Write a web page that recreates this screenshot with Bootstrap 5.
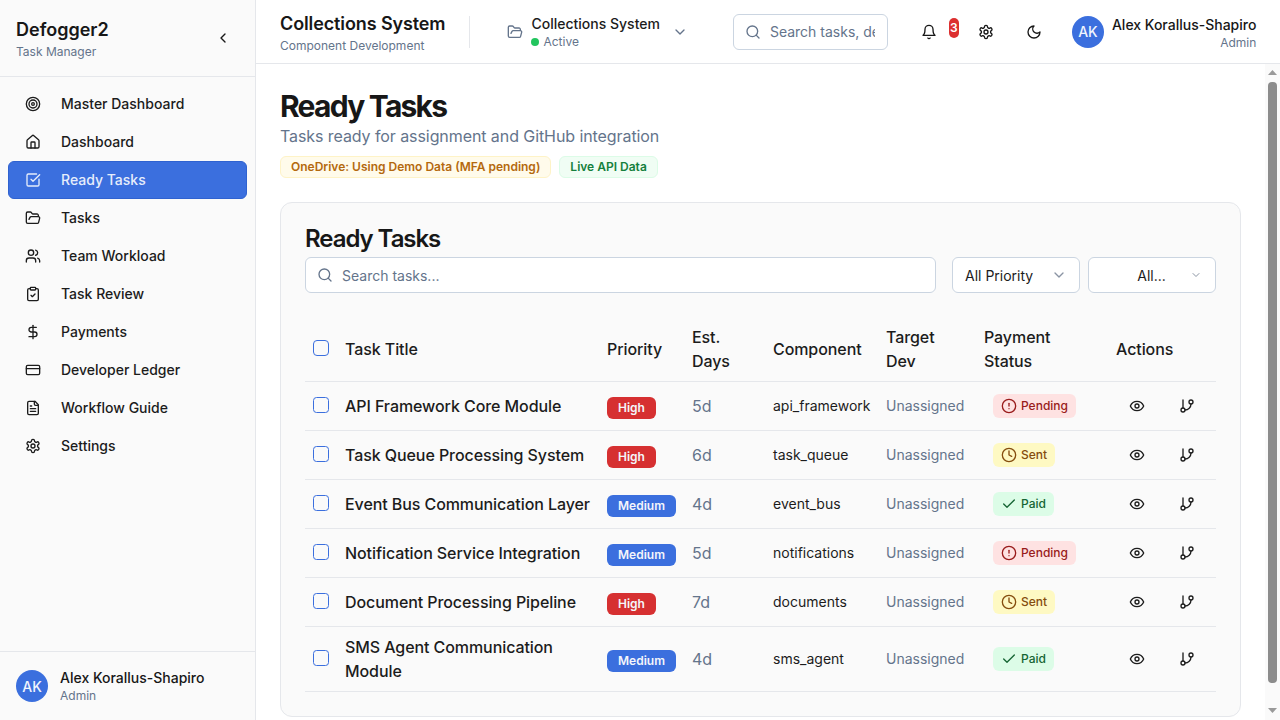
<!DOCTYPE html>
<html lang="en">
<head>
    <meta charset="UTF-8">
    <meta name="viewport" content="width=device-width, initial-scale=1.0">
    <title>Ready Tasks</title>
    <link href="https://cdn.jsdelivr.net/npm/bootstrap@5.3.0/dist/css/bootstrap.min.css" rel="stylesheet">
    <style>
        body {
            font-family: "Inter", "Liberation Sans", sans-serif;
            color: #171717;
            font-size: 14px;
        }
        .ico {
            width: 16px;
            height: 16px;
            fill: none;
            stroke: currentColor;
            stroke-width: 2;
            stroke-linecap: round;
            stroke-linejoin: round;
            flex-shrink: 0;
        }
        .muted-text { color: #64748b; }

        /* sidebar */
        .side-panel {
            width: 256px;
            flex-shrink: 0;
            background: #fafafa;
            border-right: 1px solid #e5e7eb;
        }
        .brand-box {
            height: 77px;
            padding: 16px 16px 0;
            border-bottom: 1px solid #e5e7eb;
        }
        .brand-name { font-size: 18px; font-weight: 600; line-height: 28px; }
        .brand-sub { font-size: 12px; line-height: 16px; color: #64748b; }
        .collapse-btn { width: 40px; height: 40px; margin-right: -4px; margin-top: 2px; }
        .side-nav { padding: 8px; }
        .side-link {
            height: 38px;
            padding: 0 16px;
            gap: 20px;
            font-weight: 500;
            line-height: 20px;
            color: #1c1c1c;
            border: 1px solid transparent;
            border-radius: 6px;
            text-decoration: none;
        }
        .side-link.is-current {
            background: #3b6fde;
            border-color: #2f62d0;
            color: #e6edfb;
        }
        .side-user {
            height: 69px;
            padding: 0 16px;
            gap: 12px;
            border-top: 1px solid #e5e7eb;
        }
        .avatar-dot {
            width: 32px;
            height: 32px;
            flex-shrink: 0;
            background: #3b6fde;
            color: #f1f5fd;
            font-weight: 500;
        }
        .user-name { font-weight: 500; line-height: 20px; white-space: nowrap; }
        .user-role { font-size: 12px; line-height: 16px; color: #64748b; }

        /* top bar */
        .top-strip {
            height: 64px;
            flex-shrink: 0;
            padding: 0 24px;
            background: #fff;
            border-bottom: 1px solid #e5e7eb;
            white-space: nowrap;
        }
        .top-title { font-size: 18px; font-weight: 600; letter-spacing: -0.11px; line-height: 24px; margin-top: 3px; }
        .top-sub { font-size: 12px; line-height: 18px; color: #64748b; margin-top: 1px; }
        .top-divider { width: 1px; height: 32px; background: #e5e7eb; margin: 0 37px 0 24px; flex-shrink: 0; }
        .project-name { font-weight: 500; line-height: 20px; color: #1c1c1c; }
        .project-state { font-size: 12px; line-height: 16px; color: #64748b; gap: 4px; }
        .state-dot { width: 8px; height: 8px; background: #22c55e; }
        .search-box {
            border: 1px solid #cbd5e1;
            border-radius: 6px;
            background: #fff;
            color: #64748b;
        }
        .search-box input {
            border: 0;
            outline: 0;
            padding: 0;
            background: transparent;
            min-width: 0;
            width: 100%;
            color: #171717;
        }
        .search-box input::placeholder { color: #64748b; opacity: 1; }
        .top-search { width: 155px; height: 36px; padding: 0 12px 0 11px; gap: 9px; margin-left: 45px; flex-shrink: 0; }
        .bell-wrap { width: 40px; height: 40px; margin-left: 21px; flex-shrink: 0; }
        .bell-count {
            top: 6px;
            left: 40px;
            width: 10px;
            height: 20px;
            background: #dc2f2f;
            color: #fff;
            font-size: 12px;
            font-weight: 600;
            border-radius: 5px;
        }
        .top-icon { width: 40px; height: 40px; flex-shrink: 0; }
        .gear-top { margin-left: 17px; }
        .moon-top { margin-left: 8px; }
        .top-user { margin-left: 18px; gap: 8px; }
        .top-user .user-name { line-height: 18px; margin-top: 2px; }
        .top-user .user-role { line-height: 15px; margin-top: 1px; }

        /* main */
        .page-scroll { overflow: hidden; padding: 24px; min-height: 0; min-width: 0; }
        .scroll-strip { width: 15px; flex-shrink: 0; background: #fafafa; padding-bottom: 2px; }
        .scroll-arrow { height: 16px; color: #999; }
        .scroll-arrow svg { width: 9px; height: 5px; fill: currentColor; }
        .scroll-thumb { width: 9px; height: 601px; margin: 2px 0 0 3px; background: #8c8c8c; border-radius: 4px; }
        .page-title { font-size: 30px; font-weight: 700; letter-spacing: -1.75px; line-height: 36px; margin: 0; }
        .page-sub { font-size: 16px; letter-spacing: -0.08px; line-height: 24px; color: #64748b; }
        .source-pill {
            font-size: 12px;
            font-weight: 600;
            line-height: 20px;
            padding: 0 10px;
            border: 1px solid;
            border-radius: 6px;
        }
        .pill-demo { background: #fffbeb; border-color: #fef3c7; color: #b4690e; }
        .pill-live { background: #f0fdf4; border-color: #dcfce7; color: #15803d; }
        .pill-row { margin-top: 8px; margin-bottom: 24px; }
        .task-panel {
            background: #fafafa;
            border: 1px solid #e5e7eb;
            border-radius: 12px;
            padding: 24px;
        }
        .panel-title { font-size: 24px; font-weight: 600; letter-spacing: -1.05px; line-height: 24px; margin: 0 0 6px; color: #171717; }
        .panel-search { height: 36px; padding: 0 12px 0 11px; gap: 9px; flex: 1; margin-right: 8px; }
        .filter-btn {
            height: 36px;
            width: 128px;
            padding: 0 12px;
            font-size: 14px;
            color: #1c1c1c;
            background: #fff;
            border: 1px solid #cbd5e1;
            border-radius: 6px;
        }
        .filter-btn .ico { color: #8a94a3; }
        .filter-narrow .ico { width: 12px; height: 12px; margin-right: 1px; }
        .filter-narrow span { flex: 1; text-align: center; padding-left: 12px; }

        .task-table { table-layout: fixed; margin: 20px 0 0; --bs-table-bg: transparent; width: 911px; }
        .task-table th, .task-table td {
            padding: 8px;
            vertical-align: middle;
            line-height: 20px;
            border-bottom: 1px solid #e5e7eb;
            color: #1c1c1c;
        }
        .task-table th { font-size: 16px; font-weight: 500; letter-spacing: -0.08px; line-height: 24px; padding-top: 12px; padding-bottom: 8px; height: 68px; }
        .task-table td { height: 49px; }
        .task-table td.task-name { font-size: 16px; font-weight: 500; letter-spacing: -0.08px; line-height: 24px; padding-right: 4px; }
        .task-table td.task-days { font-size: 16px; color: #64748b; }
        .task-table td.task-dev { color: #64748b; }
        .row-check {
            width: 16px;
            height: 16px;
            margin: -2px 0 0;
            display: block;
            background-color: transparent;
            border: 1px solid #3b6fde;
            border-radius: 4px;
        }
        .level-tag {
            display: inline-block;
            height: 22px;
            line-height: 22px;
            padding: 0 11px;
            font-size: 12px;
            font-weight: 600;
            color: #f4f6fb;
            border-radius: 6px;
            vertical-align: -4px;
        }
        .level-high { background: #d63031; }
        .level-medium { background: #3b6fde; }
        .pay-tag {
            display: inline-flex;
            align-items: center;
            gap: 4px;
            height: 24px;
            padding: 0 8px;
            margin-left: 9px;
            font-size: 12px;
            font-weight: 500;
            border-radius: 6px;
        }
        .pay-pending { background: #fee2e2; color: #991b1b; }
        .pay-sent { background: #fef9c3; color: #854d0e; }
        .pay-paid { background: #dcfce7; color: #166534; }
        .act-btn { width: 42px; height: 32px; color: #1c1c1c; }
    </style>
</head>
<body class="d-flex vh-100 overflow-hidden">
    <svg class="d-none">
        <symbol id="i-target" viewBox="0 0 24 24"><circle cx="12" cy="12" r="10"/><circle cx="12" cy="12" r="6"/><circle cx="12" cy="12" r="2"/></symbol>
        <symbol id="i-home" viewBox="0 0 24 24"><path d="M15 21v-8a1 1 0 0 0-1-1h-4a1 1 0 0 0-1 1v8"/><path d="M3 10a2 2 0 0 1 .709-1.528l7-5.999a2 2 0 0 1 2.582 0l7 5.999A2 2 0 0 1 21 10v9a2 2 0 0 1-2 2H5a2 2 0 0 1-2-2z"/></symbol>
        <symbol id="i-check-square" viewBox="0 0 24 24"><path d="M21 10.656V19a2 2 0 0 1-2 2H5a2 2 0 0 1-2-2V5a2 2 0 0 1 2-2h12.344"/><path d="m9 11 3 3L22 4"/></symbol>
        <symbol id="i-folder" viewBox="0 0 24 24"><path d="m6 14 1.5-2.9A2 2 0 0 1 9.24 10H20a2 2 0 0 1 1.94 2.5l-1.54 6a2 2 0 0 1-1.95 1.5H4a2 2 0 0 1-2-2V5a2 2 0 0 1 2-2h3.9a2 2 0 0 1 1.69.9l.81 1.2a2 2 0 0 0 1.67.9H18a2 2 0 0 1 2 2v2"/></symbol>
        <symbol id="i-users" viewBox="0 0 24 24"><path d="M16 21v-2a4 4 0 0 0-4-4H6a4 4 0 0 0-4 4v2"/><circle cx="9" cy="7" r="4"/><path d="M22 21v-2a4 4 0 0 0-3-3.87"/><path d="M16 3.13a4 4 0 0 1 0 7.75"/></symbol>
        <symbol id="i-clipboard" viewBox="0 0 24 24"><rect x="8" y="2" width="8" height="4" rx="1"/><path d="M16 4h2a2 2 0 0 1 2 2v14a2 2 0 0 1-2 2H6a2 2 0 0 1-2-2V6a2 2 0 0 1 2-2h2"/><path d="m9 14 2 2 4-4"/></symbol>
        <symbol id="i-dollar" viewBox="0 0 24 24"><path d="M12 2v20"/><path d="M17 5H9.5a3.5 3.5 0 0 0 0 7h5a3.5 3.5 0 0 1 0 7H6"/></symbol>
        <symbol id="i-card" viewBox="0 0 24 24"><rect x="2" y="5" width="20" height="14" rx="2"/><path d="M2 10h20"/></symbol>
        <symbol id="i-file" viewBox="0 0 24 24"><path d="M15 2H6a2 2 0 0 0-2 2v16a2 2 0 0 0 2 2h12a2 2 0 0 0 2-2V7Z"/><path d="M14 2v4a2 2 0 0 0 2 2h4"/><path d="M10 9H8"/><path d="M16 13H8"/><path d="M16 17H8"/></symbol>
        <symbol id="i-gear" viewBox="0 0 24 24"><path d="M12.22 2h-.44a2 2 0 0 0-2 2v.18a2 2 0 0 1-1 1.73l-.43.25a2 2 0 0 1-2 0l-.15-.08a2 2 0 0 0-2.73.73l-.22.38a2 2 0 0 0 .73 2.73l.15.1a2 2 0 0 1 1 1.72v.51a2 2 0 0 1-1 1.74l-.15.09a2 2 0 0 0-.73 2.73l.22.38a2 2 0 0 0 2.73.73l.15-.08a2 2 0 0 1 2 0l.43.25a2 2 0 0 1 1 1.73V20a2 2 0 0 0 2 2h.44a2 2 0 0 0 2-2v-.18a2 2 0 0 1 1-1.73l.43-.25a2 2 0 0 1 2 0l.15.08a2 2 0 0 0 2.73-.73l.22-.39a2 2 0 0 0-.73-2.73l-.15-.08a2 2 0 0 1-1-1.74v-.5a2 2 0 0 1 1-1.74l.15-.09a2 2 0 0 0 .73-2.73l-.22-.38a2 2 0 0 0-2.73-.73l-.15.08a2 2 0 0 1-2 0l-.43-.25a2 2 0 0 1-1-1.73V4a2 2 0 0 0-2-2z"/><circle cx="12" cy="12" r="3"/></symbol>
        <symbol id="i-left" viewBox="0 0 24 24"><path d="m15 18-6-6 6-6"/></symbol>
        <symbol id="i-down" viewBox="0 0 24 24"><path d="m6 9 6 6 6-6"/></symbol>
        <symbol id="i-search" viewBox="0 0 24 24"><circle cx="11" cy="11" r="8"/><path d="m21 21-4.3-4.3"/></symbol>
        <symbol id="i-bell" viewBox="0 0 24 24"><path d="M6 8a6 6 0 0 1 12 0c0 7 3 9 3 9H3s3-2 3-9"/><path d="M10.3 21a1.94 1.94 0 0 0 3.4 0"/></symbol>
        <symbol id="i-moon" viewBox="0 0 24 24"><path d="M12 3a6 6 0 0 0 9 9 9 9 0 1 1-9-9Z"/></symbol>
        <symbol id="i-eye" viewBox="0 0 24 24"><path d="M2 12s3-7 10-7 10 7 10 7-3 7-10 7-10-7-10-7Z"/><circle cx="12" cy="12" r="3"/></symbol>
        <symbol id="i-branch" viewBox="0 0 24 24"><path d="M6 3v12"/><circle cx="18" cy="6" r="3"/><circle cx="6" cy="18" r="3"/><path d="M18 9a9 9 0 0 1-9 9"/></symbol>
        <symbol id="i-alert" viewBox="0 0 24 24"><circle cx="12" cy="12" r="10"/><path d="M12 8v4"/><path d="M12 16h.01"/></symbol>
        <symbol id="i-clock" viewBox="0 0 24 24"><circle cx="12" cy="12" r="10"/><path d="M12 6v6l4 2"/></symbol>
        <symbol id="i-check" viewBox="0 0 24 24"><path d="M20 6 9 17l-5-5"/></symbol>
    </svg>

    <!-- Sidebar -->
    <aside class="side-panel d-flex flex-column">
        <div class="brand-box d-flex justify-content-between align-items-start">
            <div>
                <div class="brand-name">Defogger2</div>
                <div class="brand-sub">Task Manager</div>
            </div>
            <div class="collapse-btn d-flex align-items-center justify-content-center"><svg class="ico"><use href="#i-left"/></svg></div>
        </div>
        <nav class="side-nav flex-grow-1 d-flex flex-column">
            <a class="side-link d-flex align-items-center" href="#"><svg class="ico"><use href="#i-target"/></svg>Master Dashboard</a>
            <a class="side-link d-flex align-items-center" href="#"><svg class="ico"><use href="#i-home"/></svg>Dashboard</a>
            <a class="side-link is-current d-flex align-items-center" href="#"><svg class="ico"><use href="#i-check-square"/></svg>Ready Tasks</a>
            <a class="side-link d-flex align-items-center" href="#"><svg class="ico"><use href="#i-folder"/></svg>Tasks</a>
            <a class="side-link d-flex align-items-center" href="#"><svg class="ico"><use href="#i-users"/></svg>Team Workload</a>
            <a class="side-link d-flex align-items-center" href="#"><svg class="ico"><use href="#i-clipboard"/></svg>Task Review</a>
            <a class="side-link d-flex align-items-center" href="#"><svg class="ico"><use href="#i-dollar"/></svg>Payments</a>
            <a class="side-link d-flex align-items-center" href="#"><svg class="ico"><use href="#i-card"/></svg>Developer Ledger</a>
            <a class="side-link d-flex align-items-center" href="#"><svg class="ico"><use href="#i-file"/></svg>Workflow Guide</a>
            <a class="side-link d-flex align-items-center" href="#"><svg class="ico"><use href="#i-gear"/></svg>Settings</a>
        </nav>
        <div class="side-user d-flex align-items-center">
            <div class="avatar-dot rounded-circle d-flex align-items-center justify-content-center">AK</div>
            <div>
                <div class="user-name">Alex Korallus-Shapiro</div>
                <div class="user-role">Admin</div>
            </div>
        </div>
    </aside>

    <div class="flex-grow-1 d-flex flex-column" style="min-width: 0">
        <!-- Top bar -->
        <header class="top-strip d-flex align-items-center">
            <div>
                <div class="top-title">Collections System</div>
                <div class="top-sub">Component Development</div>
            </div>
            <div class="top-divider"></div>
            <svg class="ico muted-text me-2"><use href="#i-folder"/></svg>
            <div>
                <div class="project-name">Collections System</div>
                <div class="project-state d-flex align-items-center"><span class="state-dot rounded-circle"></span>Active</div>
            </div>
            <svg class="ico muted-text" style="margin-left: 12px"><use href="#i-down"/></svg>
            <div class="search-box top-search d-flex align-items-center">
                <svg class="ico"><use href="#i-search"/></svg>
                <input type="text" placeholder="Search tasks, developers...">
            </div>
            <div class="bell-wrap position-relative d-flex align-items-center justify-content-center">
                <svg class="ico"><use href="#i-bell"/></svg>
                <span class="bell-count position-absolute d-flex align-items-center justify-content-center">3</span>
            </div>
            <div class="top-icon gear-top d-flex align-items-center justify-content-center"><svg class="ico"><use href="#i-gear"/></svg></div>
            <div class="top-icon moon-top d-flex align-items-center justify-content-center"><svg class="ico"><use href="#i-moon"/></svg></div>
            <div class="top-user d-flex align-items-center">
                <div class="avatar-dot rounded-circle d-flex align-items-center justify-content-center">AK</div>
                <div class="text-end">
                    <div class="user-name">Alex Korallus-Shapiro</div>
                    <div class="user-role">Admin</div>
                </div>
            </div>
        </header>

        <div class="d-flex flex-grow-1" style="min-height: 0">
            <!-- Page content -->
            <main class="page-scroll flex-grow-1">
                <h1 class="page-title">Ready Tasks</h1>
                <div class="page-sub">Tasks ready for assignment and GitHub integration</div>
                <div class="pill-row d-flex gap-2">
                    <span class="source-pill pill-demo">OneDrive: Using Demo Data (MFA pending)</span>
                    <span class="source-pill pill-live">Live API Data</span>
                </div>

                <section class="task-panel">
                    <h2 class="panel-title">Ready Tasks</h2>
                    <div class="d-flex gap-2">
                        <div class="search-box panel-search d-flex align-items-center">
                            <svg class="ico"><use href="#i-search"/></svg>
                            <input type="text" placeholder="Search tasks...">
                        </div>
                        <button class="filter-btn d-flex align-items-center justify-content-between" type="button">All Priority<svg class="ico"><use href="#i-down"/></svg></button>
                        <button class="filter-btn filter-narrow d-flex align-items-center" type="button"><span>All...</span><svg class="ico"><use href="#i-down"/></svg></button>
                    </div>

                    <table class="table task-table">
                        <colgroup>
                            <col style="width: 32px"><col style="width: 262px"><col style="width: 85px"><col style="width: 81px">
                            <col style="width: 113px"><col style="width: 98px"><col style="width: 132px"><col style="width: 108px">
                        </colgroup>
                        <thead>
                            <tr>
                                <th><input class="form-check-input row-check" type="checkbox"></th>
                                <th>Task Title</th>
                                <th>Priority</th>
                                <th>Est. Days</th>
                                <th>Component</th>
                                <th>Target Dev</th>
                                <th>Payment Status</th>
                                <th>Actions</th>
                            </tr>
                        </thead>
                        <tbody id="taskRows"></tbody>
                    </table>
                </section>
            </main>

            <!-- Scrollbar of the page area -->
            <div class="scroll-strip d-flex flex-column">
                <div class="scroll-arrow d-flex align-items-center justify-content-center"><svg viewBox="0 0 9 5"><path d="M4.5 0 9 5H0z"/></svg></div>
                <div class="scroll-thumb"></div>
                <div class="scroll-arrow mt-auto d-flex align-items-center justify-content-center"><svg viewBox="0 0 9 5"><path d="M0 0h9L4.5 5z"/></svg></div>
            </div>
        </div>
    </div>

    <script src="https://cdn.jsdelivr.net/npm/bootstrap@5.3.0/dist/js/bootstrap.bundle.min.js"></script>
    <script>
        const tasks = [
            ['API Framework Core Module', 'High', '5d', 'api_framework', 'Pending'],
            ['Task Queue Processing System', 'High', '6d', 'task_queue', 'Sent'],
            ['Event Bus Communication Layer', 'Medium', '4d', 'event_bus', 'Paid'],
            ['Notification Service Integration', 'Medium', '5d', 'notifications', 'Pending'],
            ['Document Processing Pipeline', 'High', '7d', 'documents', 'Sent'],
            ['SMS Agent Communication Module', 'Medium', '4d', 'sms_agent', 'Paid']
        ];
        const payIcons = { Pending: 'i-alert', Sent: 'i-clock', Paid: 'i-check' };

        // Build the table rows
        document.getElementById('taskRows').innerHTML = tasks.map(t => `
            <tr>
                <td><input class="form-check-input row-check" type="checkbox"></td>
                <td class="task-name">${t[0]}</td>
                <td><span class="level-tag level-${t[1].toLowerCase()}">${t[1]}</span></td>
                <td class="task-days">${t[2]}</td>
                <td>${t[3]}</td>
                <td class="task-dev">Unassigned</td>
                <td><span class="pay-tag pay-${t[4].toLowerCase()}"><svg class="ico"><use href="#${payIcons[t[4]]}"/></svg>${t[4]}</span></td>
                <td>
                    <div class="d-flex gap-2">
                        <div class="act-btn d-flex align-items-center justify-content-center"><svg class="ico"><use href="#i-eye"/></svg></div>
                        <div class="act-btn d-flex align-items-center justify-content-center"><svg class="ico"><use href="#i-branch"/></svg></div>
                    </div>
                </td>
            </tr>`).join('');
    </script>
</body>
</html>
